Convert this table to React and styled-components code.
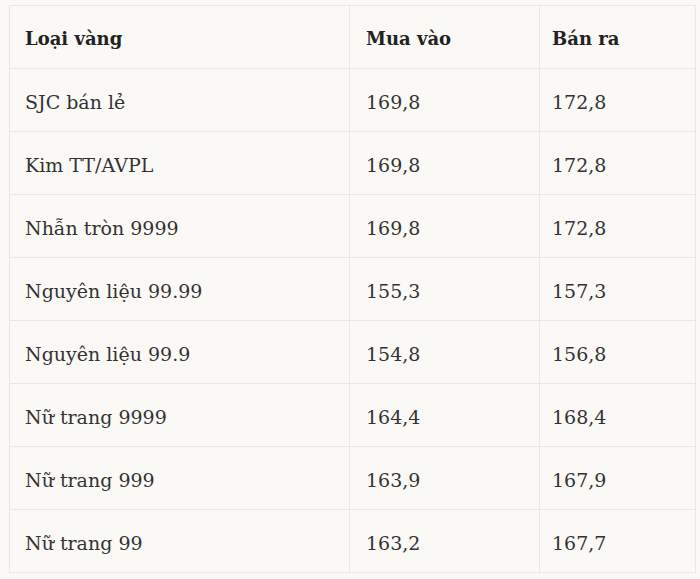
import React from "react";
import styled, { createGlobalStyle } from "styled-components";

const Global = createGlobalStyle`
  html, body { margin: 0; padding: 0; background: #faf9f6; }
  body { font-family: "DejaVu Serif", "Liberation Serif", serif; color: #2b2b2b; }
`;

const Wrap = styled.div`
  padding: 5px 5px 0 9px;
`;

const Table = styled.table`
  width: 686px;
  border-collapse: collapse;
  table-layout: fixed;
  background: #faf9f6;
  border: 1px solid #eae8e3;
`;

const Col = styled.col`
  width: ${(p) => p.$w}px;
`;

const Cell = styled.td`
  box-sizing: border-box;
  height: 63px;
  padding: 3px 0 0 ${(p) => p.$pad || 15}px;
  border: 1px solid #eae8e3;
  font-size: ${(p) => (p.$head ? 18 : 19)}px;
  font-weight: ${(p) => (p.$head ? 700 : 400)};
  color: ${(p) => (p.$head ? "#222" : "#333")};
  text-align: left;
  vertical-align: middle;
  white-space: nowrap;
`;

const rows = [
  ["SJC bán lẻ", "169,8", "172,8"],
  ["Kim TT/AVPL", "169,8", "172,8"],
  ["Nhẫn tròn 9999", "169,8", "172,8"],
  ["Nguyên liệu 99.99", "155,3", "157,3"],
  ["Nguyên liệu 99.9", "154,8", "156,8"],
  ["Nữ trang 9999", "164,4", "168,4"],
  ["Nữ trang 999", "163,9", "167,9"],
  ["Nữ trang 99", "163,2", "167,7"],
];

export default function App() {
  return (
    <>
      <Global />
      <Wrap>
        <Table>
          <colgroup>
            <Col $w={340} />
            <Col $w={190} />
            <Col $w={156} />
          </colgroup>
          <thead>
            <tr>
              <Cell as="th" $head>Loại vàng</Cell>
              <Cell as="th" $head $pad={16}>Mua vào</Cell>
              <Cell as="th" $head $pad={12}>Bán ra</Cell>
            </tr>
          </thead>
          <tbody>
            {rows.map((r) => (
              <tr key={r[0]}>
                <Cell>{r[0]}</Cell>
                <Cell $pad={16}>{r[1]}</Cell>
                <Cell $pad={12}>{r[2]}</Cell>
              </tr>
            ))}
          </tbody>
        </Table>
      </Wrap>
    </>
  );
}
